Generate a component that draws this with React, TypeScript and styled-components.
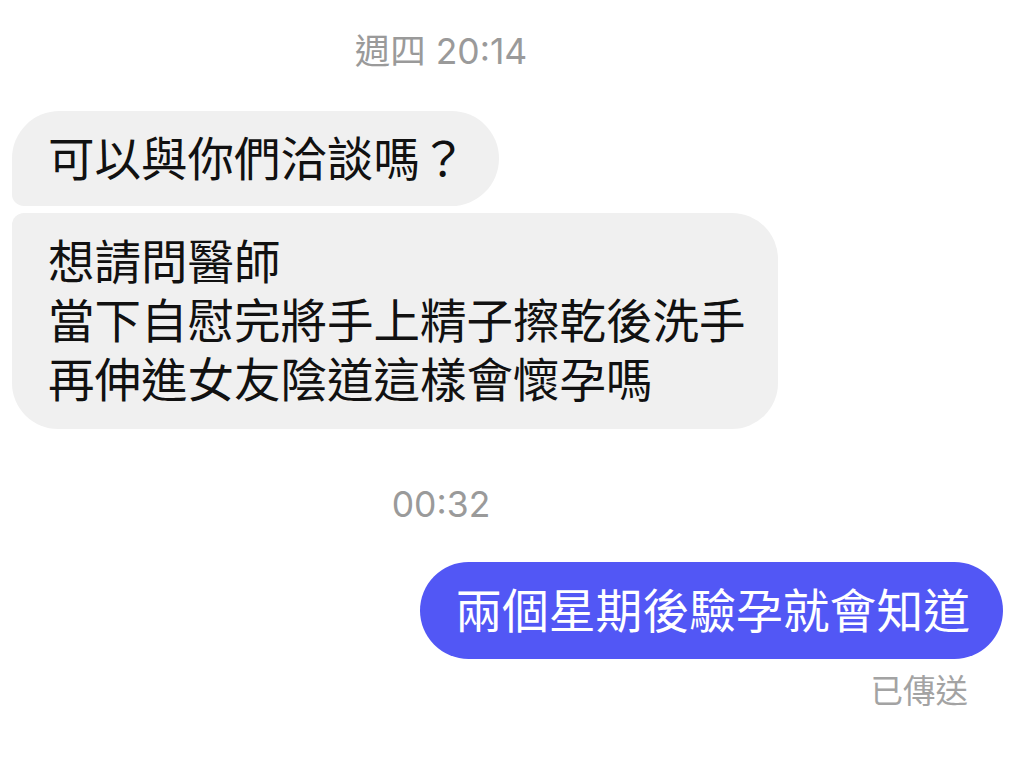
import React from "react";
import styled, { createGlobalStyle } from "styled-components";

const Global = createGlobalStyle`
  html, body { margin: 0; padding: 0; background: #ffffff; }
  body { font-family: "Noto Sans CJK TC", "Noto Sans", sans-serif; }
`;

const Page = styled.div`
  width: 1024px;
  height: 759px;
  box-sizing: border-box;
  padding: 30px 21px 0 12px;
  display: flex;
  flex-direction: column;
  overflow: hidden;
`;

const Stamp = styled.div<{ $top?: number }>`
  margin-top: ${(p) => p.$top ?? 0}px;
  height: 44px;
  line-height: 44px;
  text-align: center;
  font-family: "Inter", "Noto Sans CJK TC", sans-serif;
  font-size: 35.5px;
  color: #9a9a9a;
  padding-right: 133px;
`;

const Bubble = styled.div<{ $mine?: boolean; $pos: "first" | "last" | "single"; $top: number }>`
  align-self: ${(p) => (p.$mine ? "flex-end" : "flex-start")};
  margin-top: ${(p) => p.$top}px;
  background: ${(p) => (p.$mine ? "#5257f5" : "#f0f0f0")};
  color: ${(p) => (p.$mine ? "#ffffff" : "#111111")};
  font-size: 46.5px;
  line-height: 59px;
  padding: 15px 32px 21px 36px;
  white-space: pre-line;
  border-radius: ${(p) =>
    p.$pos === "first"
      ? "48px 48px 48px 12px"
      : p.$pos === "last"
      ? "12px 46px 46px 46px"
      : "49px"};
`;

const Tall = styled(Bubble)`
  padding-top: 16px;
  padding-bottom: 23px;
`;

const Sent = styled(Bubble)`
  padding: 16px 33px 22px 35px;
  font-size: 46.8px;
`;

const Status = styled.div`
  align-self: flex-end;
  margin-top: 12px;
  margin-right: 35px;
  font-size: 32.5px;
  line-height: 36px;
  color: #a3a3a3;
`;

export default function App() {
  return (
    <>
      <Global />
      <Page>
        <Stamp>週四 20:14</Stamp>
        <Bubble $pos="first" $top={37}>可以與你們洽談嗎？</Bubble>
        <Tall $pos="last" $top={7}>
          {"想請問醫師\n當下自慰完將手上精子擦乾後洗手\n再伸進女友陰道這樣會懷孕嗎"}
        </Tall>
        <Stamp $top={54}>00:32</Stamp>
        <Sent $mine $pos="single" $top={35}>兩個星期後驗孕就會知道</Sent>
        <Status>已傳送</Status>
      </Page>
    </>
  );
}
